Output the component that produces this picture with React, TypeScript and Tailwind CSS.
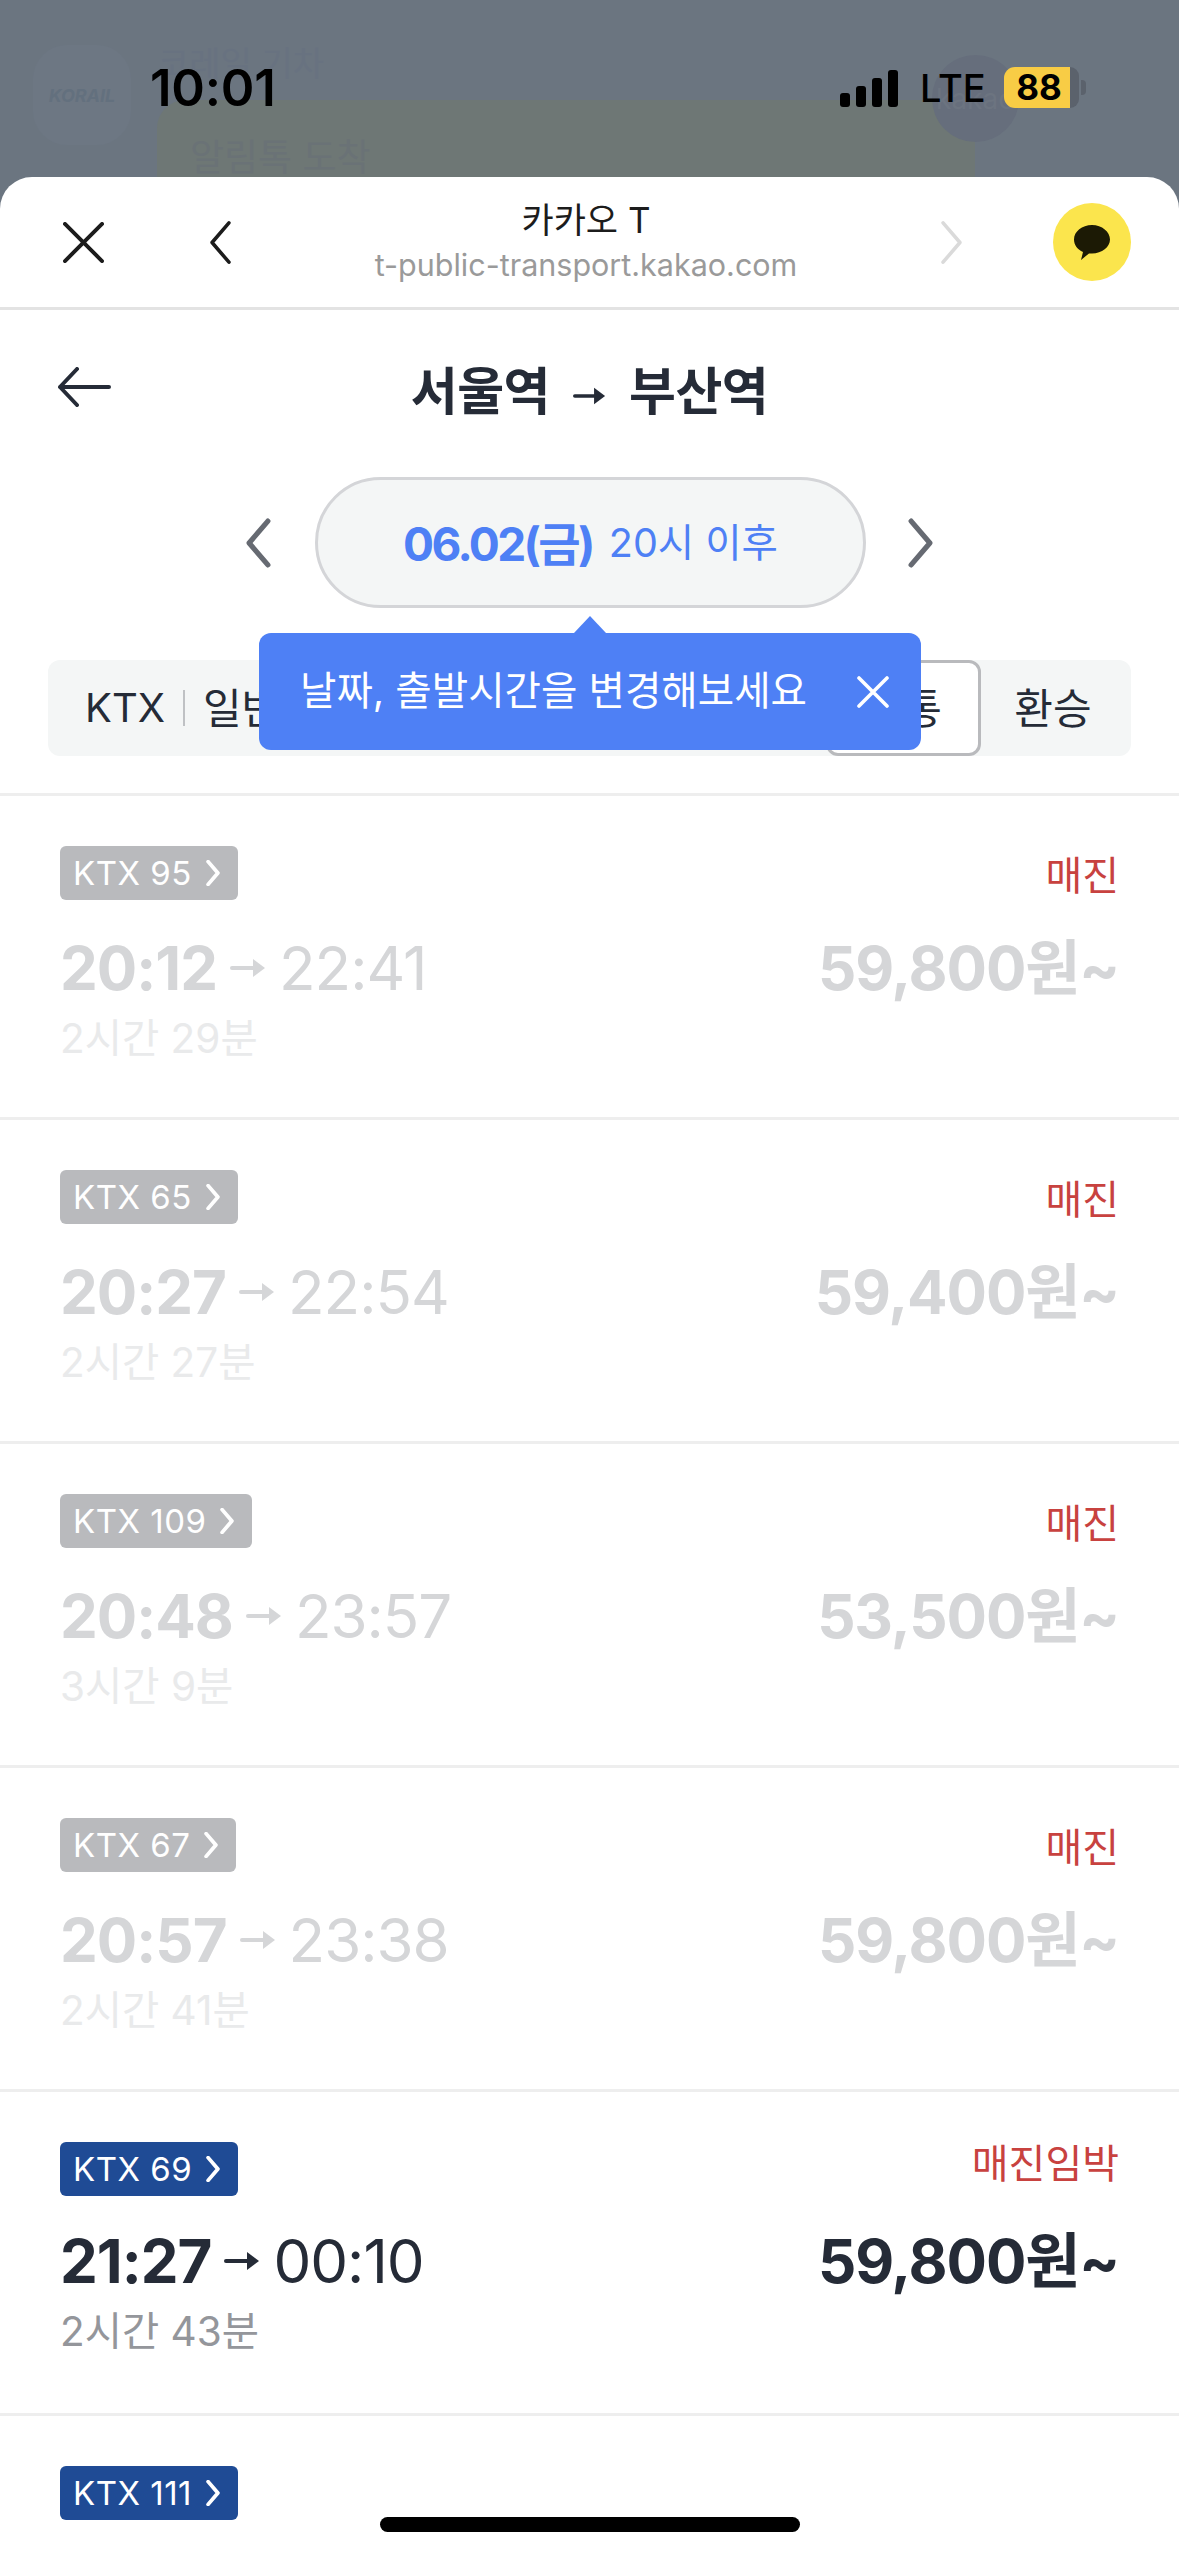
import React from "react";

const font = { fontFamily: '"Inter","Noto Sans CJK KR",sans-serif' };

type Row = { no: string; dep: string; arr: string; dur: string; price: string; status: string; off: boolean };
const rows: Row[] = [
  { no: "KTX 95", dep: "20:12", arr: "22:41", dur: "2시간 29분", price: "59,800원~", status: "매진", off: true },
  { no: "KTX 65", dep: "20:27", arr: "22:54", dur: "2시간 27분", price: "59,400원~", status: "매진", off: true },
  { no: "KTX 109", dep: "20:48", arr: "23:57", dur: "3시간 9분", price: "53,500원~", status: "매진", off: true },
  { no: "KTX 67", dep: "20:57", arr: "23:38", dur: "2시간 41분", price: "59,800원~", status: "매진", off: true },
  { no: "KTX 69", dep: "21:27", arr: "00:10", dur: "2시간 43분", price: "59,800원~", status: "매진임박", off: false },
];

function Chev({ dir, className, w = 3 }: { dir: "l" | "r"; className: string; w?: number }) {
  return (
    <svg viewBox="0 0 24 48" className={className} fill="none" stroke="currentColor" strokeWidth={w} strokeLinecap="round" strokeLinejoin="round">
      <path d={dir === "l" ? "M21 3 L3 24 L21 45" : "M3 3 L21 24 L3 45"} />
    </svg>
  );
}

function Arrow({ className }: { className: string }) {
  return (
    <svg viewBox="0 0 36 24" className={className}>
      <path d="M2 12 H24" stroke="currentColor" strokeWidth="4" strokeLinecap="round" />
      <path d="M23 3 L35 12 L23 21 Z" fill="currentColor" />
    </svg>
  );
}

function Badge({ no, off }: { no: string; off: boolean }) {
  return (
    <div className={`flex h-[54px] w-fit items-center gap-[14px] rounded-[6px] pl-[13px] pr-[18px] text-[33px] text-white ${off ? "bg-[#b9babd]" : "bg-[#1f4b95]"}`}>
      <span className="pt-[2px] tracking-[0.5px]">{no}</span>
      <Chev dir="r" className="h-[26px] w-[14px]" w={7} />
    </div>
  );
}

function TrainRow({ r }: { r: Row }) {
  return (
    <div className="flex h-[324px] flex-col border-b-[3px] border-[#eeeeee] px-[60px] pt-[50px]">
      <div className="flex items-start justify-between">
        <Badge no={r.no} off={r.off} />
        <span className={`text-[40px] leading-[54px] text-[#c8423f] ${r.off ? "pt-[3px]" : "mt-[-5px] h-[54px]"}`}>{r.status}</span>
      </div>
      <div className={`mt-[27px] flex items-center justify-between ${r.off ? "text-[#d5d6d8]" : "text-[#252b37]"}`}>
        <div className="flex items-center tracking-[-1px]">
          <span className="text-[60px] leading-[76px] font-bold">{r.dep}</span>
          <Arrow className="mx-[13px] h-[24px] w-[36px]" />
          <span className="text-[60px] leading-[76px]">{r.arr}</span>
        </div>
        <span className="text-[60px] leading-[76px] font-bold tracking-[-1.1px]">{r.price}</span>
      </div>
      <div className={`mt-[5px] text-[40.5px] leading-[56px] ${r.off ? "text-[#e9eaeb]" : "text-[#94969b]"}`}>{r.dur}</div>
    </div>
  );
}

export default function App() {
  return (
    <div style={font} className="relative h-[2556px] w-[1179px] overflow-hidden bg-[#6b7580]">
      {/* dimmed page behind the sheet */}
      <div className="absolute left-[33px] top-[45px] flex h-[100px] w-[98px] items-center justify-center rounded-[34px] bg-[#6d7783] text-[18px] font-bold italic text-[#63707e]">KORAIL</div>
      <span className="absolute left-[158px] top-[38px] text-[34px] text-[#687280]">코레일 기차</span>
      <div className="absolute left-[157px] top-[100px] h-[90px] w-[818px] rounded-t-[28px] bg-[#6e7775]">
        <span className="ml-[33px] mt-[38px] block text-[37px] leading-[40px] text-[#6a7276]">알림톡 도착</span>
      </div>
      <div className="absolute left-[932px] top-[55px] flex h-[87px] w-[87px] items-center justify-center rounded-full bg-[#666e7c] text-[28px] text-[#6c7480]">kakao</div>

      {/* status bar */}
      <div className="absolute left-[150px] top-[58px] text-[51px] leading-[60px] font-semibold tracking-[-0.2px] text-black">10:01</div>
      <div className="absolute left-[840px] top-[69px] flex items-center">
        <svg viewBox="0 0 58 37" className="h-[37px] w-[58px]">
          <rect x="0" y="23" width="10" height="14" rx="3" fill="#000" />
          <rect x="16" y="16" width="10" height="21" rx="3" fill="#000" />
          <rect x="32" y="8" width="10" height="29" rx="3" fill="#000" />
          <rect x="48" y="0" width="10" height="37" rx="3" fill="#000" />
        </svg>
        <span className="ml-[22px] text-[38px] leading-[38px] font-medium text-black">LTE</span>
      </div>
      <div className="absolute left-[1004px] top-[67px] flex h-[41px] w-[66px] items-center justify-center rounded-l-[11px] bg-[#f8cc45] pl-[4px] text-[35px] font-bold text-black">88</div>
      <div className="absolute left-[1070px] top-[67px] h-[41px] w-[9px] rounded-r-[9px] bg-[#5b626c]" />
      <div className="absolute left-[1081px] top-[80px] h-[15px] w-[5px] rounded-r-[4px] bg-[#5b626c]" />

      {/* sheet */}
      <div className="absolute inset-x-0 top-[177px] bottom-0 overflow-hidden rounded-t-[32px] bg-white">
        {/* browser bar */}
        <div className="relative flex h-[133px] items-center border-b-[3px] border-[#e3e3e3] pl-[63px] pr-[48px]">
          <svg viewBox="0 0 42 42" className="h-[41px] w-[41px] text-[#1c1c1c]" fill="none" stroke="currentColor" strokeWidth="4" strokeLinecap="round">
            <path d="M2 2 L40 40 M40 2 L2 40" />
          </svg>
          <Chev dir="l" className="ml-[104px] h-[45px] w-[25px] text-[#1c1c1c]" w={3.8} />
          <div className="flex flex-1 flex-col items-center">
            <span className="mt-[-2px] text-[35px] leading-[46px] text-[#1c1c1c]">카카오 T</span>
            <span className="mt-[2px] text-[30.5px] leading-[40px] text-[#9a9a9a]">t-public-transport.kakao.com</span>
          </div>
          <Chev dir="r" className="mr-[89px] h-[45px] w-[25px] text-[#dadada]" w={3.8} />
          <div className="flex h-[78px] w-[78px] items-center justify-center rounded-full bg-[#fbe54d]">
            <svg viewBox="0 0 36 36" className="h-[36px] w-[36px]">
              <path d="M18 1C8 1 0 7.5 0 15.5c0 5.5 3.6 10 9 12.5L7 36l8-6.6c1 .1 2 .1 3 .1 10 0 18-6.5 18-14S28 1 18 1Z" fill="#1c1a05" />
            </svg>
          </div>
        </div>

        {/* title */}
        <div className="relative flex h-[164px] items-center justify-center text-[#252b37]">
          <svg viewBox="0 0 54 40" className="absolute left-[57px] top-[57px] h-[40px] w-[54px]" fill="none" stroke="currentColor" strokeWidth="4" strokeLinecap="round" strokeLinejoin="round">
            <path d="M52 20 H3 M20 2 L3 20 L20 38" />
          </svg>
          <span className="flex items-center text-[51px] font-bold tracking-[-0.5px]">
            서울역
            <Arrow className="mx-[23px] mt-[8px] h-[24px] w-[33px]" />
            부산역
          </span>
        </div>

        {/* date picker */}
        <div className="mt-[3px] flex items-center justify-center">
          <Chev dir="l" className="mr-[44px] h-[54px] w-[25px] text-[#666a72]" w={5} />
          <div className="flex h-[131px] w-[551px] items-center justify-center rounded-[66px] border-[3px] border-[#d4d5d8] bg-[#f4f6f6] pt-[3px] text-[#4e80f5]">
            <span className="text-[46px] font-bold tracking-[-2.6px]">06.02(금)</span>
            <span className="ml-[16px] text-[39.5px]">20시 이후</span>
          </div>
          <Chev dir="r" className="ml-[42px] h-[54px] w-[25px] text-[#666a72]" w={5} />
        </div>

        {/* filters */}
        <div className="mx-[48px] mt-[52px] flex h-[96px] items-center justify-between rounded-[12px] bg-[#f4f6f6] text-[#252b37]">
          <div className="flex items-center pl-[37px]">
            <span className="text-[40px]">KTX</span>
            <span className="mx-[18px] h-[36px] w-[2px] bg-[#bfc1c4]" />
            <span className="text-[42px]">일반</span>
          </div>
          <div className="flex h-full items-center text-[42px]">
            <div className="flex h-full w-[155px] items-center justify-end rounded-[12px] border-[3px] border-[#b9babd] bg-white pr-[36px]">직통</div>
            <div className="w-[150px] pr-[6px] text-center">환승</div>
          </div>
        </div>

        <div className="mt-[37px] border-b-[3px] border-[#eeeeee]" />

        {rows.map((r) => (
          <TrainRow key={r.no} r={r} />
        ))}
        <div className="px-[60px] pt-[50px]">
          <Badge no="KTX 111" off={false} />
        </div>
      </div>

      {/* tooltip */}
      <div className="absolute left-[259px] top-[633px] flex h-[117px] w-[662px] items-center rounded-[12px] bg-[#4e80f5] pl-[41px] text-[39.6px] text-white">
        <span className="absolute left-[315px] top-[-17px] h-0 w-0 border-x-[16px] border-b-[17px] border-x-transparent border-b-[#4e80f5]" />
        <span>날짜, 출발시간을 변경해보세요</span>
        <svg viewBox="0 0 32 32" className="absolute left-[598px] top-[43px] h-[32px] w-[32px]" fill="none" stroke="#fff" strokeWidth="3.6" strokeLinecap="round">
          <path d="M2 2 L30 30 M30 2 L2 30" />
        </svg>
      </div>

      {/* home indicator */}
      <div className="absolute bottom-[24px] left-[380px] h-[15px] w-[420px] rounded-full bg-black" />
    </div>
  );
}
